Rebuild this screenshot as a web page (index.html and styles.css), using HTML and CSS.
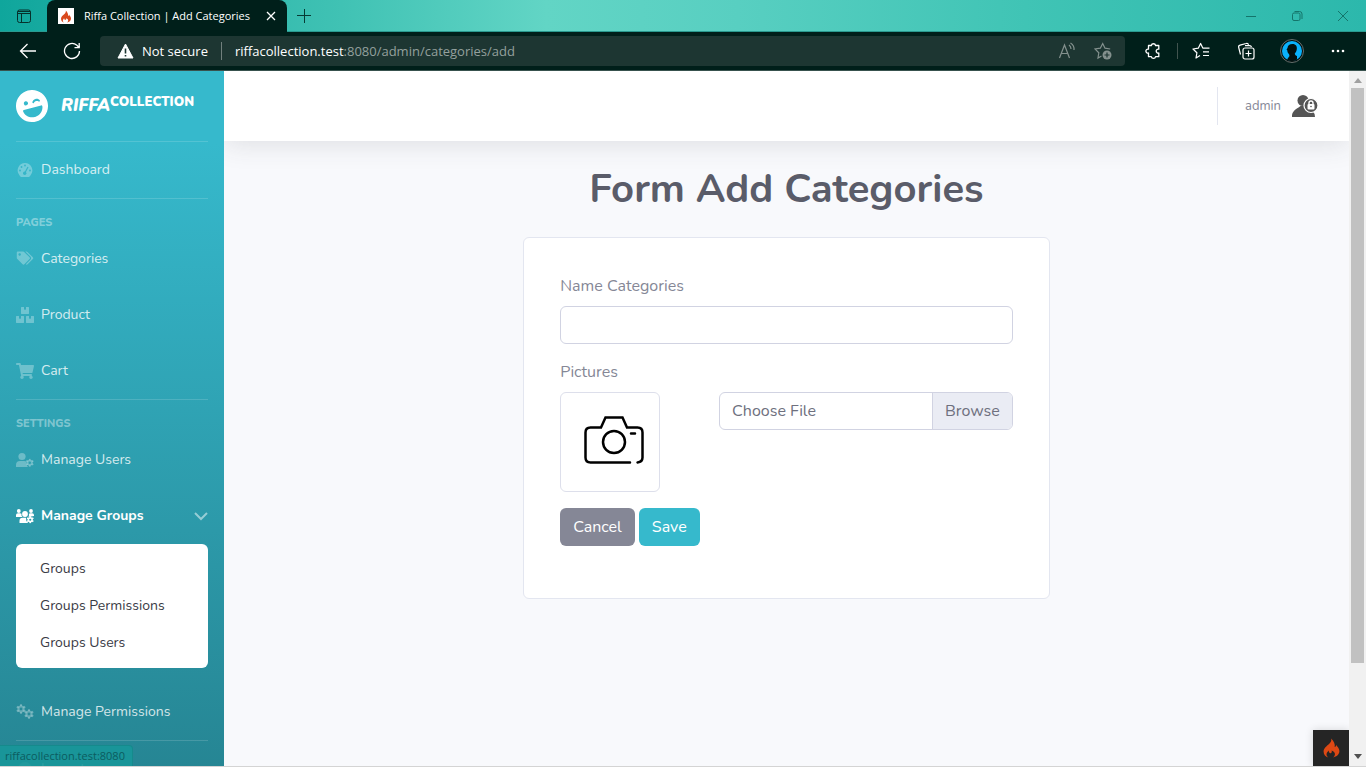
FILE: index.html
```html
<!DOCTYPE html>
<html lang="en">
<head>
<meta charset="utf-8">
<meta name="viewport" content="width=device-width, initial-scale=1">
<title>Riffa Collection | Add Categories</title>
<link rel="stylesheet" href="styles.css">
</head>
<body>
<svg class="defs" aria-hidden="true">
  <symbol id="flame" viewBox="0 0 24 24"><path d="M11.500 0c1 2.800-.6 4.800-2.600 6.900C6 9.700 2 12 2 16.300c0 4 2.600 6.500 6 7.700-1.500-1-2.300-2.200-2.300-3.700 0-2.200 1.700-3.200 2.400-5 .8 1 .5 3 2.300 3.300 1.700.2 2.500-1.500 1.700-3.300 3 1 4.700 3.200 4.200 5.300-.3 1.300-1 2.300-2.200 3.400 4.500-1 7.900-4 7.900-8.200 0-3.700-2.900-5.500-4-8 .1 1.700-.8 2.700-2 3C16.900 7.500 15 3 11.500 0z"/></symbol>
  <symbol id="gear" viewBox="-12 -12 24 24"><circle r="6" fill="none" stroke="currentColor" stroke-width="5"/><path fill="none" stroke="currentColor" stroke-width="5" d="M0-11.500V-7M0 7V11.500M-10-5.750L-6-3.500M6 3.500L10 5.750M10-5.750L6-3.500M-6 3.500L-10 5.750"/></symbol>
</svg>

<header class="browser">
  <div class="tabstrip">
    <button class="tab-actions" aria-label="Tab actions"><svg width="16" height="16" viewBox="0 0 16 16" fill="none" stroke="#06312c"><rect x="1.500" y="2" width="13" height="12.500" rx="2"/><path d="M2 3.500h12M1.500 5.500h13M5.500 5.500v9"/></svg></button>
    <div class="tab">
      <span class="favicon"><svg width="12" height="13" fill="#d9481c"><use href="#flame"/></svg></span>
      <span class="tab-title">Riffa Collection | Add Categories</span>
      <button class="tab-close" aria-label="Close tab"><svg width="10" height="10" viewBox="0 0 10 10" stroke="#fff" stroke-width="1.300"><path d="M1 1l8 8M9 1L1 9"/></svg></button>
    </div>
    <button class="new-tab" aria-label="New tab"><svg width="16" height="16" viewBox="0 0 16 16" stroke="#063b35"><path d="M1 7.500h14M8.500 1v14"/></svg></button>
    <div class="window-controls">
      <button aria-label="Minimize"><svg width="12" height="12" viewBox="0 0 12 12" stroke="#14756b"><path d="M1 6.500h10"/></svg></button>
      <button aria-label="Restore"><svg width="12" height="12" viewBox="0 0 12 12" fill="none" stroke="#14756b"><rect x="1.500" y="3" width="7.500" height="7.500" rx="1.500"/><path d="M3.500 1.500h5a2.500 2.500 0 0 1 2.500 2.500v5"/></svg></button>
      <button aria-label="Close"><svg width="12" height="12" viewBox="0 0 12 12" stroke="#14756b"><path d="M1 1l10 10M11 1L1 11"/></svg></button>
    </div>
  </div>
  <div class="toolbar">
    <button class="nav-btn" aria-label="Back"><svg width="18" height="18" viewBox="0 0 18 18" fill="none" stroke="#fff" stroke-width="1.300"><path d="M17 9H1.500M8.500 2L1.500 9l7 7"/></svg></button>
    <button class="nav-btn" aria-label="Refresh"><svg width="18" height="18" viewBox="0 0 18 18" fill="none" stroke="#fff" stroke-width="1.300"><path d="M16.500 9a7.500 7.500 0 1 1-2.600-5.700L16 5.500M16.200 1v4.700h-4.700"/></svg></button>
    <div class="address">
      <svg width="17" height="16" viewBox="0 0 17 16"><path d="M8.500 1L16 15H1z" fill="#fff" stroke="#fff" stroke-linejoin="round"/><path d="M8.500 5.500v5M8.500 12v1.600" stroke="#1d3632" stroke-width="1.600"/></svg>
      <span class="insecure">Not secure</span>
      <span class="url"><b>riffacollection.test</b>:8080/admin/categories/add</span>
      <button aria-label="Read aloud"><svg width="18" height="18" viewBox="0 0 18 18" fill="none" stroke="#84918e" stroke-width="1.200"><path d="M1.500 16L6.500 3l5 13M3.300 11.500h6.400M11 3q2 1.500 2 4M12.500 1q4 2.500 3.500 7"/></svg></button>
      <button aria-label="Add to favorites"><svg width="18" height="18" viewBox="0 0 18 18" fill="none" stroke="#84918e" stroke-width="1.200"><path d="M7.500 14L4 16l.8-5.200L1 7l5.300-.8L8.700 1.500 11 6.200l5.200.8"/><circle cx="13" cy="13" r="4.500" fill="#84918e" stroke="none"/><path d="M10.500 13h5M13 10.500v5" stroke="#1d3632"/></svg></button>
    </div>
    <button class="ext" aria-label="Extensions"><svg width="18" height="18" viewBox="0 0 18 18" fill="none" stroke="#fff" stroke-width="1.300"><path d="M4.500 3.500h2.800a2.200 2.200 0 0 1 4.300 0h3.200v3.700a2 2 0 1 0 0 3.800v3.700h-3.200a2.200 2.200 0 0 1-4.300 0H4.500V11a2 2 0 1 1 0-3.800z" stroke-linejoin="round"/></svg></button>
    <span class="divider"></span>
    <div class="tools">
      <button aria-label="Favorites"><svg width="18" height="18" viewBox="0 0 18 18" fill="none" stroke="#fff" stroke-width="1.200"><path d="M8 13.500L4 16l.9-5.200L1 7l5.300-.8L8.600 1.500l2.200 4.600h6.700M11 9.800h6M11 13.500h6" stroke-linejoin="round"/></svg></button>
      <button aria-label="Collections"><svg width="18" height="18" viewBox="0 0 18 18" fill="none" stroke="#fff" stroke-width="1.200"><path d="M3.500 12.500L1.700 5.500a2 2 0 0 1 1.400-2.400l6-1.600a2 2 0 0 1 2.500 1.200M14.500 5a2 2 0 0 0-2-1.300H8"/><rect x="6" y="6" width="11" height="11" rx="2"/><path d="M11.500 8.500v6M8.500 11.500h6"/></svg></button>
      <button aria-label="Profile"><svg width="24" height="24" viewBox="0 0 24 24"><circle cx="12" cy="12" r="11.500" fill="#03110f" stroke="#66706e"/><circle cx="12" cy="12" r="10" fill="#0ab1fb"/><path d="M12.500 5c3.400 0 4.700 2.300 4.300 5.300-.3 2.200-1.300 3.400-2 4.200 0 1.700 1.200 2 2.200 2.500V20.500c-3 2-7 2-10 0l2.500-3.500-.5-2c-1.300-1.200-1.700-2.500-1.700-3.800l-.8-.5 1-1.700C7.800 6.600 9.500 5 12.500 5z" fill="#03110f"/></svg></button>
      <button aria-label="Settings and more"><svg width="14" height="4" viewBox="0 0 14 4" fill="#fff"><circle cx="2" cy="2" r="1.300"/><circle cx="7" cy="2" r="1.300"/><circle cx="12" cy="2" r="1.300"/></svg></button>
    </div>
  </div>
</header>

<div class="viewport">
  <nav class="sidebar">
    <a class="brand" href="#">
      <svg width="32" height="32" viewBox="0 0 496 496" fill="currentColor"><g transform="rotate(-15 248 248)"><path fill-rule="evenodd" d="M248 0C111 0 0 111 0 248s111 248 248 248 248-111 248-248S385 0 248 0zm20 198c4-25 34-42 60-42s56 17 60 42c2 11-11 18-20 11l-9-9c-15-13-47-13-62 0l-9 9c-8 7-22 0-20-11zM168 152a32 32 0 1 1 0 64a32 32 0 0 1 0-64zM402 293c-9 74-73 131-151 131h-6c-78 0-142-57-151-131-1-10 6-18 16-18h276c10 0 17 8 16 18z"/></g></svg>
      <span class="brand-text"><i>RIFFA</i><sup>COLLECTION</sup></span>
    </a>
    <hr>
    <a class="link" href="#"><svg viewBox="0 0 18 16"><path fill="currentColor" fill-rule="evenodd" d="M9 1a7.300 7.300 0 0 1 6 11.500q-.8 1.500-2 2.500H5q-1.200-1-2-2.500A7.300 7.300 0 0 1 9 1z"/><path d="M8.500 11.500L12 5" stroke="#35b5c8" stroke-width="1.200"/><g fill="#35b5c8"><circle cx="8.700" cy="11.300" r="1.700"/><circle cx="4" cy="8.500" r=".9"/><circle cx="5.500" cy="5" r=".9"/><circle cx="9" cy="3.500" r=".9"/><circle cx="14" cy="8.500" r=".9"/></g></svg><span>Dashboard</span></a>
    <hr class="spaced">
    <div class="heading">Pages</div>
    <a class="link" href="#"><svg viewBox="-30 -20 700 622"><path fill="currentColor" d="M497.900 225.900L286 14A48 48 0 0 0 252 0H48C21.500 0 0 21.500 0 48v204a48 48 0 0 0 14 34l212 212c18.700 18.700 49 18.700 68 0l204-204c18.700-18.700 18.700-49 0-68zM112 160c-26.500 0-48-21.500-48-48s21.500-48 48-48 48 21.500 48 48-21.500 48-48 48zm514 134L422 498c-18.700 18.700-49 18.700-68 0l174-174.500c17-17 26-39.600 26-63.600s-9.400-46.600-26-63.600L331 0h49a48 48 0 0 1 34 14l212 212c18.700 18.700 18.700 49 0 68z"/></svg><span>Categories</span></a>
    <a class="link" href="#"><svg viewBox="0 0 576 512"><path fill="currentColor" d="M560 288h-80v96l-32-21.300-32 21.300v-96h-80c-8.800 0-16 7.200-16 16v192c0 8.800 7.200 16 16 16h224c8.800 0 16-7.200 16-16V304c0-8.800-7.200-16-16-16zm-384-64h224c8.800 0 16-7.200 16-16V16c0-8.800-7.200-16-16-16h-80v96l-32-21.300L256 96V0h-80c-8.800 0-16 7.200-16 16v192c0 8.800 7.200 16 16 16zm64 64h-80v96l-32-21.300L96 384v-96H16c-8.800 0-16 7.200-16 16v192c0 8.800 7.200 16 16 16h224c8.800 0 16-7.200 16-16V304c0-8.800-7.200-16-16-16z"/></svg><span>Product</span></a>
    <a class="link" href="#"><svg viewBox="0 0 576 512"><path fill="currentColor" d="M528.100 301.300l47.300-208C578.800 78.300 567.400 64 552 64H159.200L150 19.200C147.800 8 137.900 0 126.500 0H24C10.700 0 0 10.700 0 24v16c0 13.300 10.700 24 24 24h69.900l70.200 343.400C147.300 417.100 136 435.200 136 456c0 30.900 25.100 56 56 56s56-25.100 56-56c0-15.700-6.400-29.800-16.800-40h209.600C430.400 426.200 424 440.300 424 456c0 30.900 25.100 56 56 56s56-25.100 56-56c0-22.200-12.900-41.300-31.600-50.400l5.500-24.300c3.400-15-8-29.300-23.400-29.300H218.100l-6.500-32h293.100c11.200 0 20.900-7.800 23.400-18.700z"/></svg><span>Cart</span></a>
    <hr class="spaced">
    <div class="heading">Settings</div>
    <a class="link" href="#"><svg viewBox="0 0 18 16"><g fill="currentColor"><circle cx="6" cy="4.500" r="3.600"/><path d="M0 15v-2q0-4 4-4h4q2 0 2.500 1-.7 3 1.500 5z"/></g><use href="#gear" x="9.500" y="6.500" width="8.500" height="8.500"/></svg><span>Manage Users</span></a>
    <a class="link active" href="#" aria-expanded="true"><svg viewBox="0 0 18 16"><g fill="currentColor"><circle cx="2.800" cy="3" r="1.900"/><circle cx="15" cy="3" r="1.900"/><circle cx="9" cy="6" r="2.900"/><path d="M0 9V7q0-1.800 2-1.800h2q1 0 1.500.6Q5 8 6.500 9zM12.500 9q.8-1.500.4-3.200.6-.6 1.300-.6h2Q18 5.200 18 7v1zM3.500 15v-2q0-3.200 3-3.200h3.500q-.5 3 2.200 5.200z"/></g><use href="#gear" x="10.500" y="8" width="7.500" height="7.500"/></svg><span>Manage Groups</span><svg class="chevron" viewBox="0 0 14 9" fill="none" stroke="currentColor" stroke-width="2"><path d="M1 1l6 6 6-6"/></svg></a>
    <div class="submenu">
      <a href="#">Groups</a>
      <a href="#">Groups Permissions</a>
      <a href="#">Groups Users</a>
    </div>
    <a class="link" href="#"><svg viewBox="0 0 18 16"><use href="#gear" x="0" y="0" width="10" height="10"/><use href="#gear" x="8" y="5" width="10" height="10"/></svg><span>Manage Permissions</span></a>
    <hr>
    <a class="link" href="#"><svg viewBox="0 0 18 16"><circle cx="9" cy="8" r="7" fill="currentColor"/></svg><span>Logout</span></a>
  </nav>

  <main class="content">
    <div class="topbar">
      <a class="user" href="#"><span>admin</span><svg width="26" height="24" viewBox="0 0 26 24" fill="#555"><circle cx="11" cy="6.500" r="5.500"/><path d="M0 23v-2q1-5 6.500-7.500l2-1.500h5q2 5 7.500 5.500 2 2 2 5.500z"/><circle cx="19" cy="11.500" r="7" stroke="#fff" stroke-width="1.200"/><rect x="15.500" y="10" width="7" height="5.500" rx="1" fill="#fff"/><path d="M17 10.500V9a2 2 0 0 1 4 0v1.500" fill="none" stroke="#fff" stroke-width="1.400"/><circle cx="19" cy="12.500" r=".8"/></svg></a>
    </div>
    <h1>Form Add Categories</h1>
    <form class="card">
      <label for="name">Name Categories</label>
      <input class="field" id="name" type="text">
      <label for="picture">Pictures</label>
      <div class="row">
        <div class="col-preview">
          <div class="preview"><svg width="60" height="48" viewBox="0 0 60 48" fill="none" stroke="#000" stroke-width="2.500" stroke-linecap="round"><path d="M46 46.500H6.500q-5 0-5-5v-25q0-5 5-5H17l4.500-10h17l4.500 10h10.500q5 0 5 5v25q0 4.500-5 5M47 17.500h4"/><circle cx="30" cy="26" r="11"/></svg></div>
        </div>
        <div class="col-file">
          <input class="file-input" id="picture" type="file">
          <label class="file" for="picture"><span class="file-name">Choose File</span><span class="browse">Browse</span></label>
        </div>
      </div>
      <div class="actions">
        <button type="button" class="btn cancel">Cancel</button>
        <button type="submit" class="btn save">Save</button>
      </div>
    </form>
    <button class="debug" aria-label="Debug toolbar"><svg width="19" height="20" fill="#dd4814"><use href="#flame"/></svg></button>
  </main>

  <div class="scrollbar" aria-hidden="true">
    <svg width="8" height="5" viewBox="0 0 8 5" fill="#a0a0a0"><path d="M4 0l4 5H0z"/></svg>
    <div class="track"><div class="thumb"></div></div>
    <svg width="8" height="5" viewBox="0 0 8 5" fill="#505050"><path d="M4 5l4-5H0z"/></svg>
  </div>
  <div class="status">riffacollection.test:8080</div>
</div>
</body>
</html>
```
FILE: styles.css
```css
* { box-sizing: border-box; }

body {
  margin: 0;
  height: 100vh;
  display: flex;
  flex-direction: column;
  overflow: hidden;
  font-family: Nunito, "Lato", sans-serif;
  font-size: 16px;
  line-height: 24px;
  color: #858796;
}

a { color: inherit; text-decoration: none; }
button { font: inherit; border: 0; padding: 0; background: none; color: inherit; }
svg { display: block; flex: none; }
.defs { position: absolute; width: 0; height: 0; }

/* Browser frame */
.browser { flex: none; font-family: "Segoe UI", "Open Sans", sans-serif; font-size: 13px; }
.browser button { display: grid; place-items: center; }

.tabstrip {
  display: flex;
  height: 32px;
  background: linear-gradient(90deg, #0fa69c 0, #18aaa0 4%, #40c2b4 25%, #62d5c5 40%, #58cfc1 54%, #40c4b5 75%, #2cb8ac 100%);
  border-bottom: 1px solid #2a9a90;
}
.tab-actions { width: 47px; }
.tab {
  display: flex;
  align-items: center;
  width: 240px;
  height: 32px;
  padding: 0 11px;
  border-radius: 8px 8px 0 0;
  background: #001f1a;
  color: #fff;
  font-size: 11px;
}
.favicon { display: grid; place-items: center; width: 16px; height: 16px; background: #fff; }
.tab-title { flex: 1; margin-left: 10px; white-space: nowrap; }
.new-tab { width: 34px; }
.window-controls { display: flex; margin-left: auto; }
.window-controls button { width: 46px; }

.toolbar {
  display: flex;
  align-items: center;
  height: 39px;
  padding: 0 5px 0 6px;
  background: #001f1a;
  border-bottom: 1px solid #38524e;
  color: #fff;
}
.nav-btn { width: 44px; height: 30px; }
.address {
  flex: 1;
  display: flex;
  align-items: center;
  height: 30px;
  margin-left: 6px;
  padding: 0 4px 0 17px;
  border-radius: 4px;
  background: #1d3632;
  line-height: 18px;
}
.insecure { margin-left: 8px; padding-right: 13px; border-right: 1px solid #71807d; }
.url { flex: 1; margin-left: 13px; color: #94a09d; }
.url b { font-weight: 400; color: #fff; }
.address button { width: 36px; }
.ext { width: 56px; }
.divider { width: 1px; height: 16px; margin-left: -4px; background: #41544f; }
.tools { display: flex; align-items: center; }
.tools button { width: 46px; }
.tools button:first-child { width: 45px; }

/* Page */
.viewport {
  position: relative;
  flex: 1;
  min-height: 0;
  display: flex;
  overflow: hidden;
  border-bottom: 1px solid #d4d4d4;
}

.sidebar {
  position: relative;
  z-index: 1;
  flex: none;
  align-self: flex-start;
  width: 224px;
  background: linear-gradient(180deg, #36b9cc 10%, #258391 100%);
  color: #fff;
}
.sidebar hr { height: 1px; margin: 0 16px; border: 0; background: rgba(255, 255, 255, .15); }
.sidebar hr.spaced { margin-bottom: 16px; }
.brand { display: flex; align-items: center; height: 70px; padding: 0 16px; }
.brand-text { margin-left: 13px; font-size: 17px; font-weight: 900; }
.brand sup { font-size: 13px; line-height: 0; vertical-align: 5px; }
.heading {
  padding: 0 16px;
  font-size: 11px;
  line-height: 16px;
  font-weight: 800;
  text-transform: uppercase;
  color: rgba(255, 255, 255, .4);
}
.link {
  display: flex;
  align-items: center;
  height: 56px;
  padding: 0 16px;
  font-size: 14px;
  color: rgba(255, 255, 255, .8);
}
.link svg { width: 18px; height: 16px; color: rgba(255, 255, 255, .3); }
.link span { margin-left: 7px; }
.link.active { font-weight: 700; color: #fff; }
.link.active svg { color: #fff; }
.link.active .chevron { width: 14px; height: 9px; margin-left: auto; color: rgba(255, 255, 255, .5); }
.submenu {
  display: grid;
  gap: 1px;
  margin: 0 16px 16px;
  padding: 7px 0;
  border-radius: 6px;
  background: #fff;
  color: #3a3b45;
  font-size: 14px;
}
.submenu a { padding: 0 24px; line-height: 36px; }

.content { position: relative; flex: 1; min-width: 0; background: #f8f9fc; }
.topbar {
  display: flex;
  justify-content: flex-end;
  align-items: center;
  height: 70px;
  background: #fff;
  box-shadow: 0 2px 28px rgba(58, 59, 69, .15);
}
.user {
  display: flex;
  align-items: center;
  gap: 11px;
  height: 38px;
  padding: 0 31px 0 27px;
  border-left: 1px solid #e3e6f0;
  font-size: 13px;
}
h1 {
  margin: 24px 0;
  text-align: center;
  font-size: 40px;
  line-height: 48px;
  font-weight: 700;
  color: #5a5c69;
}
.card {
  width: calc(50% - 36px);
  margin: 0 auto;
  padding: 36px 36px 52px;
  border: 1px solid #e3e6f0;
  border-radius: 6px;
  background: #fff;
}
.card label { display: block; margin-bottom: 8px; }
.field {
  display: block;
  width: 100%;
  height: 38px;
  margin-bottom: 16px;
  padding: 6px 12px;
  border: 1px solid #d1d3e2;
  border-radius: 6px;
  font: inherit;
}
.row { display: flex; margin: 0 -12px 16px; }
.col-preview { width: calc(100% / 3); padding: 0 12px; }
.col-file { position: relative; width: calc(200% / 3); padding: 0 12px; }
.preview {
  display: grid;
  place-items: center;
  width: 100px;
  height: 100px;
  padding: 0 0 4px 8px;
  border: 1px solid #dddfeb;
  border-radius: 6px;
}
.file-input { position: absolute; width: 1px; height: 1px; opacity: 0; }
.card .file {
  display: flex;
  height: 38px;
  margin: 0;
  border: 1px solid #d1d3e2;
  border-radius: 6px;
  line-height: 36px;
  color: #6e707e;
  overflow: hidden;
}
.file-name { flex: 1; padding: 0 12px; }
.browse { padding: 0 12px; border-left: 1px solid #d1d3e2; background: #eaecf4; }
.actions { display: flex; gap: 4px; }
.btn { height: 38px; padding: 0 13px; border-radius: 6px; color: #fff; }
.cancel { background: #858796; }
.save { background: #36b9cc; }

.debug {
  position: absolute;
  right: 0;
  bottom: 0;
  display: grid;
  place-items: center;
  width: 36px;
  height: 36px;
  background: #252525;
  box-shadow: 0 0 8px rgba(0, 0, 0, .15);
}

.scrollbar {
  position: relative;
  flex: none;
  display: flex;
  flex-direction: column;
  align-items: center;
  width: 17px;
  padding: 7px 0;
  background: #f1f1f1;
}
.track { flex: 1; width: 13px; margin: 5px 0; }
.thumb { height: 87%; background: #c1c1c1; }

.status {
  position: absolute;
  z-index: 2;
  left: 0;
  bottom: 0;
  padding: 0 7px 0 5px;
  border: 1px solid #158a8c;
  border-width: 1px 1px 0 0;
  border-radius: 0 4px 0 0;
  background: rgba(24, 151, 153, .9);
  color: #0c5c60;
  font-family: "Segoe UI", "Open Sans", sans-serif;
  font-size: 11px;
  line-height: 20px;
}
```
